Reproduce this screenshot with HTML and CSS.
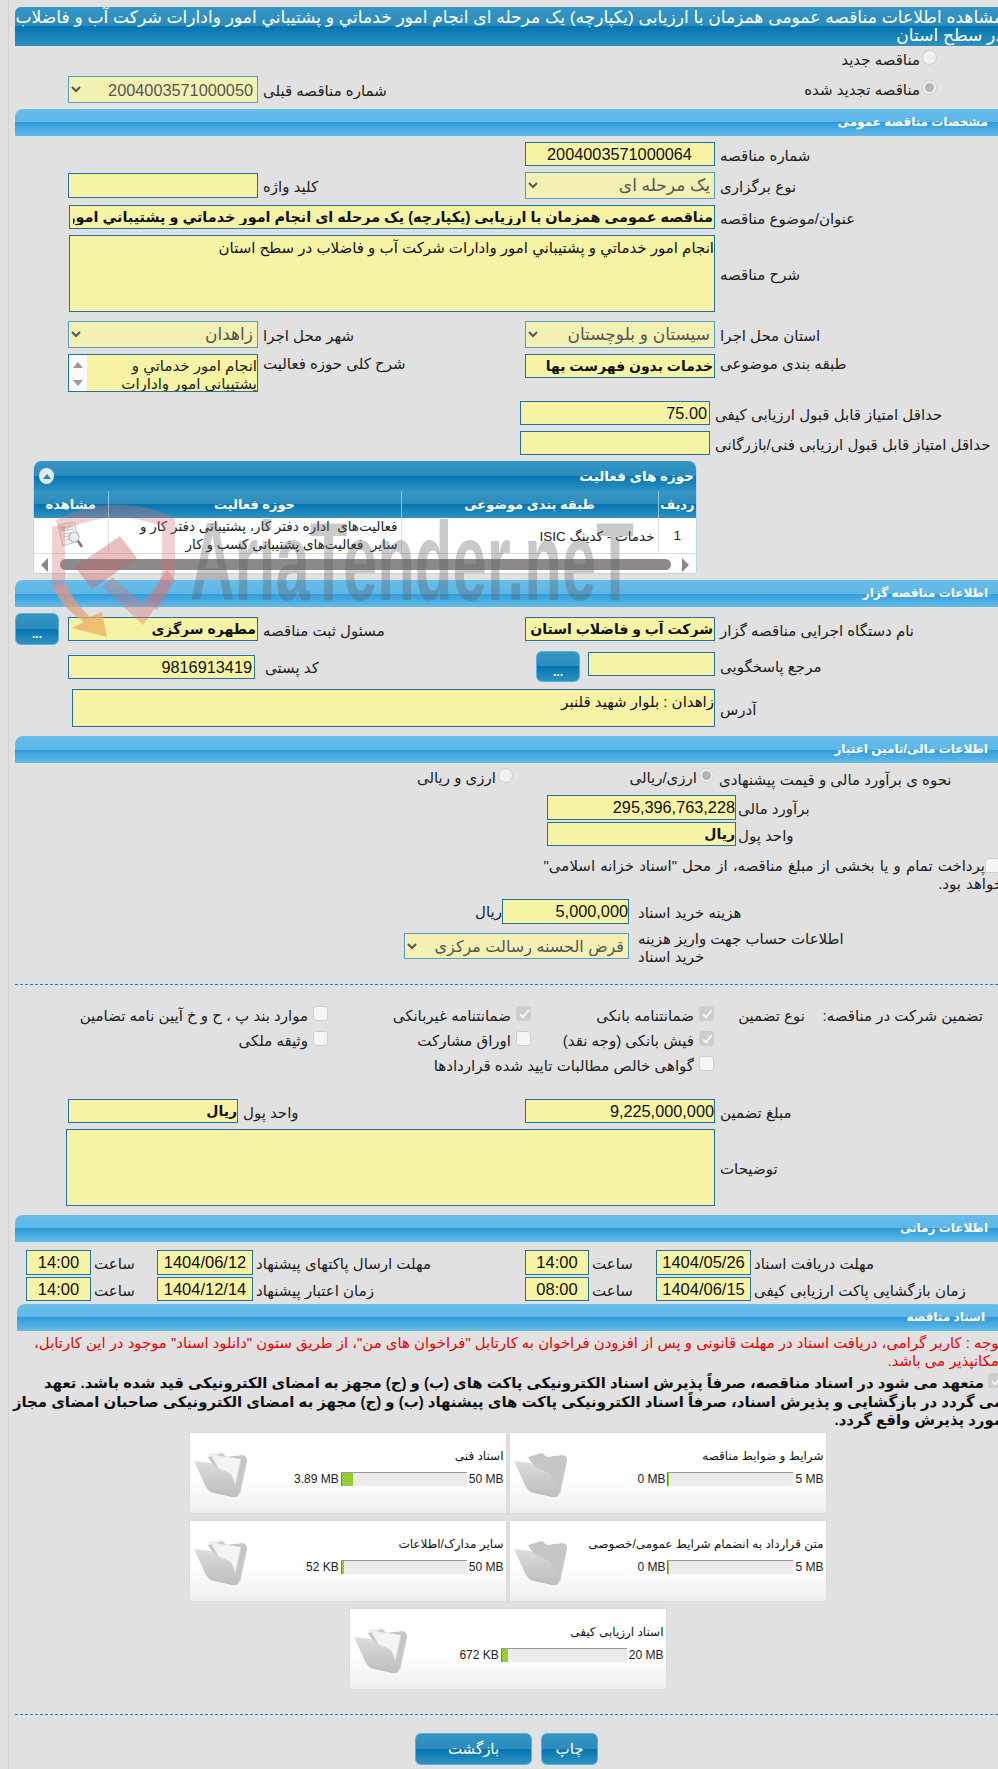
FILE: index.html
```
<!DOCTYPE html>
<html lang="fa" dir="rtl">
<head>
<meta charset="utf-8">
<title>مشاهده اطلاعات مناقصه</title>
<link rel="stylesheet" href="styles.css">
</head>
<body>
<svg class="defs" width="0" height="0" aria-hidden="true">
  <defs>
    <linearGradient id="fg" x1="0" y1="0" x2="0" y2="1"><stop offset="0" stop-color="#dcdcdc"/><stop offset="1" stop-color="#bdbdbd"/></linearGradient>
    <linearGradient id="og" x1="0" y1="0" x2="0.6" y2="1"><stop offset="0" stop-color="#dc8d8d"/><stop offset=".6" stop-color="#e5a27c"/><stop offset="1" stop-color="#ecb25c"/></linearGradient>
    <symbol id="folder" viewBox="0 0 54 46">
      <path d="M14 5L28 1L33 5L48 3Q54 4 53 9L46 42L30 30Z" fill="#c6c6c6"/>
      <path d="M0 9L16 11Q20 12 24 16L33 20Q37 21 39 26L45 43Q42 46 38 45L20 41Q14 40 11 33Z" fill="url(#fg)"/>
    </symbol>
    <symbol id="folder-full" viewBox="0 0 54 46">
      <path d="M14 5L28 1L33 5L48 3Q54 4 53 9L46 42L30 30Z" fill="#c6c6c6"/>
      <path d="M16 2L47 7L40 40L24 16Z" fill="#f4f4f4" stroke="#d5d5d5" stroke-width=".6"/>
      <path d="M0 9L16 11Q20 12 24 16L33 20Q37 21 39 26L45 43Q42 46 38 45L20 41Q14 40 11 33Z" fill="url(#fg)"/>
    </symbol>
  </defs>
</svg>
<div class="page">
<div class="content">
  <h1 class="title">مشاهده اطلاعات مناقصه عمومی همزمان با ارزیابی (یکپارچه) یک مرحله ای انجام امور خدماتي و پشتيباني امور وادارات شرکت آب و فاضلاب<br>در سطح استان</h1>

  <div class="row row-r0">
    <div class="opt opt-first"><input class="radio" type="radio" disabled><span>مناقصه جدید</span></div>
  </div>
  <div class="row row-r1">
    <div class="opt opt-first"><input class="radio" type="radio" checked disabled><span>مناقصه تجدید شده</span></div>
    <div></div>
    <div class="lbl lbl-l">شماره مناقصه قبلی</div>
    <select class="sel sel-num" disabled><option>2004003571000050</option></select>
  </div>

  <h2 class="bar bar-first">مشخصات مناقصه عمومی</h2>

  <div class="row">
    <div class="lbl">شماره مناقصه</div>
    <input class="inp num center" value="2004003571000064" readonly>
  </div>
  <div class="row row-type">
    <div class="lbl">نوع برگزاری</div>
    <select class="sel" disabled><option>یک مرحله ای</option></select>
    <div class="lbl lbl-l">کلید واژه</div>
    <input class="inp inp-key" readonly>
  </div>
  <div class="row">
    <div class="lbl">عنوان/موضوع مناقصه</div>
    <input class="inp wide strong inp-subject" value="مناقصه عمومی همزمان با ارزیابی (یکپارچه) یک مرحله ای انجام امور خدماتي و پشتيباني امور وادارات شرکت آب و فاضلاب در سطح استان" readonly>
  </div>
  <div class="row">
    <div class="lbl">شرح مناقصه</div>
    <textarea class="inp area wide area-desc" readonly>انجام امور خدماتي و پشتيباني امور وادارات شرکت آب و فاضلاب در سطح استان</textarea>
  </div>
  <div class="row row-prov">
    <div class="lbl">استان محل اجرا</div>
    <select class="sel" disabled><option>سیستان و بلوچستان</option></select>
    <div class="lbl lbl-l">شهر محل اجرا</div>
    <select class="sel" disabled><option>زاهدان</option></select>
  </div>
  <div class="row row-subj">
    <div class="lbl lbl-top">طبقه بندی موضوعی</div>
    <input class="inp strong" value="خدمات بدون فهرست بها" readonly>
    <div class="lbl lbl-l lbl-top">شرح کلی حوزه فعالیت</div>
    <div class="listbox">
      <div class="listbox-text">انجام امور خدماتي و<br>پشتيباني امور وادارات</div>
      <div class="listbox-sb"><span class="tri-up"></span><span class="tri-down"></span></div>
    </div>
  </div>
  <div class="row row-score row-score1">
    <div class="lbl">حداقل امتیاز قابل قبول ارزیابی کیفی</div>
    <input class="inp num" value="75.00" readonly>
  </div>
  <div class="row row-score row-score2">
    <div class="lbl">حداقل امتیاز قابل قبول ارزیابی فنی/بازرگانی</div>
    <input class="inp num" readonly>
  </div>

  <section class="panel">
    <div class="panel-head">
      <span>حوزه های فعالیت</span>
      <span class="collapse"><i></i></span>
    </div>
    <table class="grid">
      <colgroup><col class="c1"><col class="c2"><col class="c3"><col class="c4"></colgroup>
      <thead><tr><th>ردیف</th><th>طبقه بندی موضوعی</th><th>حوزه فعالیت</th><th>مشاهده</th></tr></thead>
      <tbody><tr>
        <td class="td-c">1</td>
        <td>خدمات - کدینگ ISIC</td>
        <td><div class="cell-clip">فعالیت‌های&nbsp; اداره دفتر کار، پشتیبانی دفتر کار و<br>سایر&nbsp; فعالیت‌های پشتیبانی کسب و کار</div></td>
        <td class="td-c">
          <svg class="doc" viewBox="0 0 32 28" width="32" height="28">
            <path d="M3 3L19 0L24 19L8 24Z" fill="#f2f2f2" stroke="#c4c4c4"/>
            <path d="M6 6L18 4M7 9L19 7M8 12L15 11M8 15L14 14M10 18L15 17" stroke="#c8c8c8" fill="none"/>
            <circle cx="19" cy="15" r="5" fill="#e8eef0" stroke="#b5b5b5" stroke-width="1.2"/>
            <path d="M23 19L27 25" stroke="#777" stroke-width="2.4"/>
          </svg>
        </td>
      </tr></tbody>
    </table>
    <div class="hscroll">
      <span class="tri-right"></span>
      <span class="thumb"></span>
      <span class="tri-left"></span>
    </div>
  </section>

  <h2 class="bar">اطلاعات مناقصه گزار</h2>

  <div class="row row-dev">
    <div class="lbl">نام دستگاه اجرایی مناقصه گزار</div>
    <input class="inp strong" value="شرکت آب و فاضلاب استان" readonly>
    <div class="lbl lbl-l2">مسئول ثبت مناقصه</div>
    <input class="inp inp-key strong" value="مطهره سرگزی" readonly>
    <button class="btn btn-dots" type="button">...</button>
  </div>
  <div class="row row-ref">
    <div class="lbl lbl-ref">مرجع پاسخگویی</div>
    <div class="ref-cell">
      <input class="inp inp-ref" readonly>
      <button class="btn btn-dots btn-ref" type="button">...</button>
    </div>
    <div class="lbl lbl-post">کد پستی</div>
    <input class="inp inp-post num" value="9816913419" readonly>
  </div>
  <div class="row row-addr">
    <div class="lbl">آدرس</div>
    <textarea class="inp area area-addr" readonly>زاهدان : بلوار شهید قلنبر</textarea>
  </div>

  <h2 class="bar bar-fin">اطلاعات مالی/تامین اعتبار</h2>

  <div class="row-method">
    <div class="lbl">نحوه ی برآورد مالی و قیمت پیشنهادی</div>
    <div class="opt"><input class="radio" type="radio" checked disabled><span>ارزی/ریالی</span></div>
    <div class="opt"><input class="radio" type="radio" disabled><span>ارزی و ریالی</span></div>
  </div>
  <div class="row-fin row-est">
    <div class="lbl lbl-tight">برآورد مالی</div>
    <input class="inp num-s" value="295,396,763,228" readonly>
  </div>
  <div class="row-fin row-cur">
    <div class="lbl lbl-tight">واحد پول</div>
    <input class="inp strong tight" value="ریال" readonly>
  </div>
  <p class="treasury"><input class="check" type="checkbox" disabled>پرداخت تمام و یا بخشی از مبلغ مناقصه، از محل "اسناد خزانه اسلامی"<br>خواهد بود.</p>
  <div class="row-fee">
    <div class="lbl lbl-fee">هزینه خرید اسناد</div>
    <input class="inp num-s inp-fee" value="5,000,000" readonly>
    <span class="unit">ریال</span>
  </div>
  <div class="row-fee row-acc">
    <div class="lbl lbl-fee">اطلاعات حساب جهت واریز هزینه<br>خرید اسناد</div>
    <select class="sel sel-acc" disabled><option>قرض الحسنه رسالت مرکزی</option></select>
  </div>

  <hr class="dash">

  <div class="guar">
    <div class="g-a">تضمین شرکت در مناقصه:</div>
    <div class="g-b">نوع تضمین</div>
    <div class="opt"><input class="check" type="checkbox" checked disabled><span>ضمانتنامه بانکی</span></div>
    <div class="opt"><input class="check" type="checkbox" checked disabled><span>ضمانتنامه غیربانکی</span></div>
    <div class="opt"><input class="check" type="checkbox" disabled><span>موارد بند پ ، ح و خ آیین نامه تضامین</span></div>
    <div></div><div></div>
    <div class="opt"><input class="check" type="checkbox" checked disabled><span>فیش بانکی (وجه نقد)</span></div>
    <div class="opt"><input class="check" type="checkbox" disabled><span>اوراق مشارکت</span></div>
    <div class="opt"><input class="check" type="checkbox" disabled><span>وثیقه ملکی</span></div>
    <div></div><div></div>
    <div class="opt opt-long"><input class="check" type="checkbox" disabled><span>گواهی خالص مطالبات تایید شده قراردادها</span></div>
  </div>

  <div class="row row-amount">
    <div class="lbl">مبلغ تضمین</div>
    <input class="inp num-s" value="9,225,000,000" readonly>
    <div class="lbl lbl-tight2">واحد پول</div>
    <input class="inp strong tight" value="ریال" readonly>
  </div>
  <div class="row row-desc">
    <div class="lbl">توضیحات</div>
    <textarea class="inp area area-note" readonly></textarea>
  </div>

  <h2 class="bar bar-fin">اطلاعات زمانی</h2>

  <div class="times">
    <div class="lbl">مهلت دریافت اسناد</div>
    <input class="inp num-t" value="1404/05/26" readonly>
    <div class="lbl">ساعت</div>
    <input class="inp num-t" value="14:00" readonly>
    <div class="lbl">مهلت ارسال پاکتهای پیشنهاد</div>
    <input class="inp num-t" value="1404/06/12" readonly>
    <div class="lbl">ساعت</div>
    <input class="inp num-t" value="14:00" readonly>

    <div class="lbl">زمان بازگشایی پاکت ارزیابی کیفی</div>
    <input class="inp num-t" value="1404/06/15" readonly>
    <div class="lbl">ساعت</div>
    <input class="inp num-t" value="08:00" readonly>
    <div class="lbl">زمان اعتبار پیشنهاد</div>
    <input class="inp num-t" value="1404/12/14" readonly>
    <div class="lbl">ساعت</div>
    <input class="inp num-t" value="14:00" readonly>
  </div>

  <h2 class="bar bar-doc">اسناد مناقصه</h2>

  <p class="note">توجه : کاربر گرامی، دریافت اسناد در مهلت قانونی و پس از افزودن فراخوان به کارتابل "فراخوان های من"، از طریق ستون "دانلود اسناد" موجود در این کارتابل،<br>امکانپذیر می باشد.</p>
  <p class="pledge"><input class="check" type="checkbox" checked disabled>متعهد می شود در اسناد مناقصه، صرفاً پذیرش اسناد الکترونیکی پاکت های (ب) و (ج) مجهز به امضای الکترونیکی قید شده باشد. تعهد<br>می گردد در بازگشایی و پذیرش اسناد، صرفاً اسناد الکترونیکی پاکت های پیشنهاد (ب) و (ج) مجهز به امضای الکترونیکی صاحبان امضای مجاز<br>مورد پذیرش واقع گردد.</p>

  <div class="cards">
    <div class="card">
      <div class="card-info">
        <div class="card-title">شرایط و ضوابط مناقصه</div>
        <div class="prog"><span class="mb" dir="ltr">5 MB</span><span class="track"><b style="width:1px"></b></span><span class="mb" dir="ltr">0 MB</span></div>
      </div>
      <svg class="folder" width="54" height="46"><use href="#folder"/></svg>
    </div>
    <div class="card">
      <div class="card-info">
        <div class="card-title">اسناد فنی</div>
        <div class="prog"><span class="mb" dir="ltr">50 MB</span><span class="track"><b style="width:11px"></b></span><span class="mb" dir="ltr">3.89 MB</span></div>
      </div>
      <svg class="folder" width="54" height="46"><use href="#folder-full"/></svg>
    </div>
    <div class="card">
      <div class="card-info">
        <div class="card-title">متن قرارداد به انضمام شرایط عمومی/خصوصی</div>
        <div class="prog"><span class="mb" dir="ltr">5 MB</span><span class="track"><b style="width:1px"></b></span><span class="mb" dir="ltr">0 MB</span></div>
      </div>
      <svg class="folder" width="54" height="46"><use href="#folder"/></svg>
    </div>
    <div class="card">
      <div class="card-info">
        <div class="card-title">سایر مدارک/اطلاعات</div>
        <div class="prog"><span class="mb" dir="ltr">50 MB</span><span class="track"><b style="width:2px"></b></span><span class="mb" dir="ltr">52 KB</span></div>
      </div>
      <svg class="folder" width="54" height="46"><use href="#folder-full"/></svg>
    </div>
    <div class="card">
      <div class="card-info">
        <div class="card-title">اسناد ارزیابی کیفی</div>
        <div class="prog"><span class="mb" dir="ltr">20 MB</span><span class="track"><b style="width:6px"></b></span><span class="mb" dir="ltr">672 KB</span></div>
      </div>
      <svg class="folder" width="54" height="46"><use href="#folder-full"/></svg>
    </div>
  </div>

  <hr class="dash dash-2">

  <div class="actions">
    <button class="btn btn-print" type="button">چاپ</button>
    <button class="btn btn-back" type="button">بازگشت</button>
  </div>
</div>

<div class="wm-text" dir="ltr" aria-hidden="true">AriaTender.neT</div>
<svg class="wm-logo" viewBox="40 495 150 150" width="150" height="150" aria-hidden="true">
  <path d="M58.500 526Q113 498 168.500 522L168.500 572Q165 592 152 606" fill="none" stroke="#d9706f" stroke-opacity=".33" stroke-width="13"/>
  <path d="M58.500 526L58.500 586" fill="none" stroke="#d9706f" stroke-opacity=".33" stroke-width="13"/>
  <path d="M75 567L120 536L137 558L92 589Z" fill="#c9605f" fill-opacity=".4"/>
  <path d="M103 587L112 577L143 603L167 570L175 580L143 625Z" fill="#d9706f" fill-opacity=".38"/>
  <path d="M52 585L65 583Q74 602 90 617L102 612L107 637L72 628L84 622Q60 606 52 585Z" fill="url(#og)" fill-opacity=".75"/>
</svg>
</div>
</body>
</html>
```
FILE: styles.css
```
html, body { margin: 0; padding: 0; background: #e1e1e1; }
body { font-family: "Liberation Sans", "DejaVu Sans", sans-serif; font-size: 15px; color: #222; }
.defs { position: absolute; }
.page { position: relative; margin-left: 8px; border-left: 1px solid #d2d2d2; padding: 7px 0 6px 6px; overflow: hidden; }
.content { margin-right: -5px; }

.title { margin: 0; height: 39px; padding-top: 2px; box-sizing: border-box; font-size: 17.1px; font-weight: normal; line-height: 18px; color: #fff; white-space: nowrap; border-radius: 6px 6px 0 0; background: linear-gradient(#3596c5 0, #2c8dbd 50%, #0475b0 50%, #2f92c2 100%); }
.bar { margin: 6px 0 0; height: 27px; box-sizing: border-box; padding: 6px 15px 0 0; font-size: 12px; font-weight: bold; line-height: 15px; color: #fff; border-radius: 8px 0 0 0; background: linear-gradient(#67bdea 0, #5db7e8 50%, #2f9ada 50%, #63bce9 100%); }
.bar-fin { margin-top: 9px; }
.bar-doc { margin: 3px 0 0 2px; padding-right: 18px; border-radius: 8px 8px 0 0; }

.row { display: grid; grid-template-columns: 288px 190px 267px 190px 53px; margin-top: 6px; align-items: center; }
.row-r0 { margin-top: 0; height: 28px; }
.row-r1 { margin-top: 2px; height: 27px; }
.row-prov { margin-top: 9px; }
.row-subj { align-items: start; }
.row-score { grid-template-columns: 293px 190px; }
.row-score1 { margin-top: 9px; }
.row-dev { height: 32px; }
.row-ref { align-items: start; height: 31px; }
.row-addr { margin-top: 7px; grid-template-columns: 288px 643px; }
.row-amount { grid-template-columns: 288px 190px 287px 170px 53px; margin-top: 21px; }
.row-desc { grid-template-columns: 288px 649px; }

.lbl { text-align: left; padding: 3px 0 0 5px; white-space: nowrap; line-height: 18px; }
.lbl-top { padding-top: 1px; }
.lbl-ref { padding-top: 7px; }
.lbl-post { padding: 8px 0 0 7px; }
.lbl-tight { padding-left: 2px; }

.inp { box-sizing: border-box; width: 100%; height: 24px; margin: 0; padding: 0 1px; border: 1px solid #1f72a3; background: #f6f4a4; font: 15px "Liberation Sans", "DejaVu Sans", sans-serif; color: #111; border-radius: 0; outline: none; }
.num { font-size: 16.3px; text-align: right; padding-right: 2px; }
.num-s { font-size: 16.3px; padding: 0; text-align: right; }
.num-t { font-size: 16.5px; text-align: center; padding: 0; height: 100%; }
.center { text-align: center; }
.strong { font-size: 14px; font-weight: bold; }
.inp-subject { font-size: 14.4px; padding-left: 3px; }
.tight { padding: 0; }
.wide { grid-column: span 3; width: 646px; }
.inp-key { height: 25px; }
.row-dev .inp-key { height: 24px; }
.area { display: block; resize: none; overflow: hidden; line-height: 17px; padding: 3px 0 0; }
.area-desc { height: 77px; }
.area-addr { height: 38px; width: 643px; }
.area-note { height: 77px; width: 649px; }
.sel { box-sizing: border-box; width: 100%; height: 27px; margin: 0; border: 1px solid #5a9ec6; background-color: #f3f0b4; color: #555; opacity: 1; font: 17px "Liberation Sans", "DejaVu Sans", sans-serif; border-radius: 0; }
.sel-num { font-size: 16.3px; }
.inp-ref { width: 127px; margin-top: 1px; }
.ref-cell { display: flex; gap: 8px; }
.inp-post { width: 187px; margin-top: 4px; justify-self: end; }

.listbox { display: flex; height: 38px; box-sizing: border-box; border: 1px solid #1f72a3; background: #f6f4a4; }
.listbox-text { flex: 1; padding-top: 2px; font-size: 15px; line-height: 18px; white-space: nowrap; overflow: hidden; }
.listbox-sb { width: 18px; background: #fafafa; display: flex; flex-direction: column; justify-content: space-between; align-items: center; padding: 7px 0 5px; box-sizing: border-box; }
.tri-up { width: 0; height: 0; border: 5px solid transparent; border-top: 0; border-bottom: 6px solid #9a9a9a; }
.tri-down { width: 0; height: 0; border: 5px solid transparent; border-bottom: 0; border-top: 6px solid #9a9a9a; }

.opt { display: flex; align-items: center; gap: 2px; white-space: nowrap; min-width: 0; }
.opt-first { padding-right: 66px; }
.radio, .check { appearance: none; box-sizing: border-box; width: 15px; height: 15px; margin: 0 0 5px; flex: none; border: 1px solid #cfcfcf; background: #f1f1f1; position: relative; }
.radio { border-radius: 50%; }
.radio:checked::after { content: ""; position: absolute; inset: 2px; border-radius: 50%; background: #b5b5b5; }
.check { border-radius: 3px; background: #f5f5f5; }
.check:checked { background: #cdcdcd; }
.check:checked::after { content: ""; position: absolute; left: 5px; top: 1px; width: 3px; height: 8px; border: solid #f5f5f5; border-width: 0 2px 2px 0; transform: rotate(40deg); }

.panel { margin: 6px 306px 0 0; width: 664px; height: 113px; box-sizing: border-box; background: #fff; border: 1px solid #b9d7e6; border-top: 0; border-radius: 8px 8px 2px 2px; overflow: hidden; }
.panel-head { display: flex; justify-content: space-between; align-items: center; height: 30px; box-sizing: border-box; padding: 0 2px 0 5px; font-size: 13.5px; font-weight: bold; color: #fff; background: linear-gradient(#3596c5 0, #2c8dbd 50%, #0475b0 50%, #2f92c2 100%); }
.collapse { width: 15px; height: 16px; border-radius: 50%; background: #dfeaf2; display: flex; align-items: center; justify-content: center; }
.collapse i { width: 0; height: 0; border: 4px solid transparent; border-top: 0; border-bottom: 5px solid #2f7fb0; }
.grid { width: 662px; table-layout: fixed; border-collapse: collapse; font-size: 13.5px; }
.c1 { width: 38px; } .c2 { width: 257px; } .c3 { width: 293px; } .c4 { width: 74px; }
.grid th { height: 27px; padding: 0; color: #fff; font-size: 13px; font-weight: bold; border-left: 1px solid #8cc6e2; background: linear-gradient(#3596c5 0, #2c8dbd 50%, #0475b0 50%, #2f92c2 100%); }
.grid th:last-child { border-left: 0; }
.grid td { height: 35px; padding: 0 3px; text-align: right; border-left: 1px solid #e3e3e3; border-bottom: 1px solid #ddd; overflow: hidden; }
.grid td:last-child { border-left: 0; }
.grid .td-c { text-align: center; }
.cell-clip { height: 35px; line-height: 18px; overflow: hidden; white-space: nowrap; }
.doc { display: block; margin: 0 auto; }
.hscroll { display: flex; align-items: center; justify-content: space-between; height: 21px; padding: 0 7px; box-sizing: border-box; }
.thumb { width: 611px; height: 11px; border-radius: 6px; background: #8a8a8a; }
.tri-right { width: 0; height: 0; border: 7px solid transparent; border-right: 0; border-left: 7px solid #888; }
.tri-left { width: 0; height: 0; border: 7px solid transparent; border-left: 0; border-right: 7px solid #888; }

.btn { box-sizing: border-box; margin: 0; padding: 0; border: 1px solid #54b3dc; border-radius: 6px; color: #fff; font: 15px "Liberation Sans", "DejaVu Sans", sans-serif; background: linear-gradient(#3596c5 0, #2c8dbd 50%, #0475b0 50%, #2f92c2 100%); }
.btn-dots { width: 44px; height: 32px; justify-self: end; font-weight: bold; font-size: 12px; padding-top: 10px; }
.btn-ref { height: 31px; }

.row-method { display: grid; grid-template-columns: 289px 201px auto; height: 24px; margin-top: 3px; align-items: center; }
.row-fin { display: grid; grid-template-columns: 267px 189px; margin-top: 5px; align-items: center; }
.row-est .inp { height: 25px; }
.row-cur { margin-top: 2px; }
.treasury { width: 470px; margin: 11px 0 0; line-height: 18px; white-space: nowrap; word-spacing: .9px; }
.treasury .check { display: inline-block; margin: 0 3px 0 0; vertical-align: -2px; }
.row-fee { display: flex; align-items: center; margin-top: 6px; }
.lbl-fee { width: 365px; box-sizing: border-box; padding-left: 0; flex: none; margin-left: 9px; }
.inp-fee { width: 127px; height: 25px; }
.unit { white-space: nowrap; }
.row-acc { margin-top: 4px; height: 36px; }
.sel-acc { width: 225px; height: 26px; flex: none; font-size: 16px; }

.dash { margin: 20px 0 0; height: 0; border: 0; border-top: 1px dashed #2a7fb0; }
.dash-2 { margin-top: 25px; }

.guar { display: grid; grid-template-columns: 198px 91px 183px 203px auto; grid-auto-rows: 25px; margin-top: 18px; align-items: center; }
.g-a { padding-right: 20px; white-space: nowrap; }
.g-b { white-space: nowrap; }
.guar .opt { gap: 5px; }
.opt-long { grid-column: span 3; }

.times { display: grid; grid-template-columns: 252px 95px 67px 64px 272px 96px 66px 65px; grid-template-rows: 25px 24px; row-gap: 2px; margin-top: 8px; align-items: center; }
.times .lbl { padding-left: 3px; }

.note { margin: 4px 0 0; color: #e00; line-height: 17.5px; white-space: nowrap; font-size: 14.9px; }
.pledge { margin: 3px 0 0; line-height: 18.5px; font-weight: bold; font-size: 14.9px; color: #111; white-space: nowrap; }
.pledge .check { display: inline-block; margin: 0 0 0 4px; vertical-align: 0; }

.cards { display: flex; flex-wrap: wrap; justify-content: center; gap: 8px 4px; width: 637px; margin: 3px 177px 0 0; }
.card { display: flex; width: 316px; height: 80px; box-sizing: border-box; background: linear-gradient(#fff 55%, #efefef 100%); box-shadow: 0 0 2px #d0d0d0; }
.card-info { flex: 1; min-width: 0; padding: 15px 2px 0; }
.card-title { line-height: 17px; font-size: 12px; white-space: nowrap; color: #111; }
.prog { display: flex; align-items: center; gap: 2px; margin-top: 7px; font-size: 12px; line-height: 15px; }
.mb { white-space: nowrap; }
.track { width: 126px; height: 14px; box-sizing: border-box; background: #ececec; border-top: 1px solid #999; display: flex; direction: ltr; }
.track b { display: block; background: #9c3; border-left: 1px solid #777; }
.folder { flex: none; margin: 19px 0 0 4px; display: block; }

.actions { display: flex; gap: 9px; margin: 18px 0 0; padding-right: 405px; }
.btn-print { width: 57px; height: 32px; }
.btn-back { width: 117px; height: 32px; }

.wm-text { position: absolute; left: 181px; top: 506px; font: bold 112px/112px "Liberation Sans", sans-serif; color: rgba(90, 90, 90, .33); transform: scaleX(.55); transform-origin: 0 0; white-space: nowrap; pointer-events: none; }
.wm-logo { position: absolute; left: 31px; top: 495px; pointer-events: none; }
```
